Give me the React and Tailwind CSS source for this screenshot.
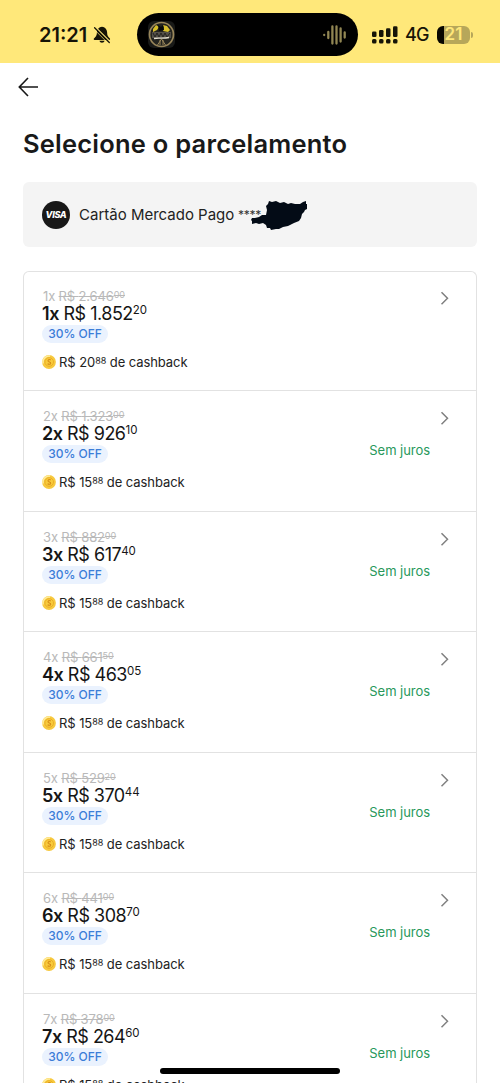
const installments = [
  { count: 1, oldValue: '2.646', oldCents: '00', value: '1.852', cents: '20', cashback: '20' },
  { count: 2, oldValue: '1.323', oldCents: '00', value: '926', cents: '10', cashback: '15', interestFree: true },
  { count: 3, oldValue: '882', oldCents: '00', value: '617', cents: '40', cashback: '15', interestFree: true },
  { count: 4, oldValue: '661', oldCents: '50', value: '463', cents: '05', cashback: '15', interestFree: true },
  { count: 5, oldValue: '529', oldCents: '20', value: '370', cents: '44', cashback: '15', interestFree: true },
  { count: 6, oldValue: '441', oldCents: '00', value: '308', cents: '70', cashback: '15', interestFree: true },
  { count: 7, oldValue: '378', oldCents: '00', value: '264', cents: '60', cashback: '15', interestFree: true },
];

function BellOffIcon() {
  return (
    <svg width="18" height="18" viewBox="0 0 18 18">
      <path
        d="M9 .8C6 1.200 4 3.400 3.900 6.200c0 3.600-1.200 4.500-3 6.300-.4.600-.1 1.400.6 1.400h14.800c.7 0 1-.8.6-1.400-1.800-1.800-2.800-2.700-2.800-6.300C14 3.400 12 1.200 9 .8ZM6.400 14.800c.3 1.200 1.300 2 2.600 2s2.300-.8 2.600-2Z"
        fill="#161407"
      />
      <path d="M2.700 1.500 18 16.800" stroke="#ffe87a" strokeWidth="1.500" />
      <path d="M1.600 1.800 16.300 16.500" stroke="#161407" strokeWidth="1.300" strokeLinecap="round" />
      <path d="M0 2.200 15 17.200" stroke="#ffe87a" strokeWidth=".7" />
    </svg>
  );
}

function AlbumArt() {
  return (
    <svg width="27" height="27" viewBox="0 0 27 27">
      <rect width="27" height="27" rx="6" fill="#191a18" />
      <circle cx="13.500" cy="13.500" r="12" fill="#24241f" stroke="#99865a" strokeWidth="1.700" />
      <path d="M5 8l3-4 3 2-2 3-4 2Z" fill="#d5bc28" />
      <path d="M15 4l4 1 3 4-2 2-5-1 1-3Z" fill="#d8bf2a" />
      <path d="M10 4l3 2 2-2 1 5-5 1Z" fill="#090b0a" />
      <path d="M4 11h19v6H4z" fill="#555149" />
      <path d="M5 12l2 4 2-4 2 4 2-4 2 4 2-4 2 4 3-4" fill="none" stroke="#24231f" />
      <path d="M6 17.500c5-1 9 .5 15-1" fill="none" stroke="#e4e0d0" strokeWidth="1.300" />
      <path d="M13.500 18l-4 6M13.500 18l4 6M12 19v5M15 19v5" stroke="#99865a" strokeWidth="1" />
    </svg>
  );
}

function Waveform() {
  return (
    <svg width="24" height="20" viewBox="0 0 24 20" stroke="#918653" strokeWidth="2.300" strokeLinecap="round">
      <path d="M1.200 9.900v.2M5.300 7v6M9.400 1.500v17M13.500 1.500v17M17.600 3.500v13M21.700 7.500v5" />
    </svg>
  );
}

function SignalIcon() {
  return (
    <svg width="26" height="18" viewBox="0 0 26 18" fill="#161407">
      <rect x="0" y="5.500" width="4.500" height="5.500" rx="1.300" />
      <rect x="7" y="4" width="4.500" height="7" rx="1.300" />
      <rect x="14" y="2.300" width="4.500" height="8.700" rx="1.300" />
      <rect x="21" y="0.300" width="4.500" height="10.700" rx="1.300" />
      <rect x="0" y="13" width="4.500" height="4.500" rx="1.500" />
      <rect x="7" y="13" width="4.500" height="4.500" rx="1.500" />
      <rect x="14" y="13" width="4.500" height="4.500" rx="1.500" />
      <rect x="21" y="13" width="4.500" height="4.500" rx="1.500" />
    </svg>
  );
}

function CoinIcon() {
  return (
    <svg className="shrink-0" width="14" height="14" viewBox="0 0 14 14">
      <circle cx="7" cy="7" r="6.900" fill="#f7c93f" />
      <path d="M1.200 8.500A6 6 0 0 1 8 1.100" fill="none" stroke="#ffec9a" strokeWidth="1.600" />
      <circle cx="7.200" cy="7" r="4.300" fill="#f8cb3c" stroke="#e9ab22" strokeWidth=".9" />
      <path d="M8.800 4.900C7 4 5.600 5 6.200 6.300c.5 1 2.700.7 2.500 2.100-.2 1-1.900 1.200-3.100.4" fill="none" stroke="#d58a16" strokeWidth="1.100" />
    </svg>
  );
}

function ChevronIcon() {
  return (
    <svg width="9" height="14" viewBox="0 0 9 14" fill="none">
      <path d="m1.500 1.300 6 6-6 6" stroke="#808080" strokeWidth="1.500" />
    </svg>
  );
}

function StatusBar() {
  return (
    <div className="flex h-[63px] shrink-0 items-start bg-[#ffe87a] pt-[13px] text-[#161407]">
      <div className="flex h-[43px] w-[137px] shrink-0 items-center pl-[39px]">
        <span className="w-[54px] text-[20px] leading-none font-semibold">21:21</span>
        <BellOffIcon />
      </div>
      <div className="flex h-[43px] w-[221px] shrink-0 items-center justify-between rounded-full bg-black pr-[11px] pl-[11px]">
        <AlbumArt />
        <Waveform />
      </div>
      <div className="flex h-[43px] items-center pl-[14px]">
        <SignalIcon />
        <span className="ml-[7px] w-[25px] text-[18px] leading-none font-medium tracking-[-0.8px]">4G</span>
        <div className="ml-[7px] flex h-[18px] w-[33px] items-center justify-center overflow-hidden rounded-[6px] bg-linear-to-r from-[#080700] from-21% to-[#b7a75a] to-21% text-[17px] leading-none font-semibold text-[#ffe87a]">
          21
        </div>
        <div className="ml-px h-[6px] w-[2px] rounded-r-full bg-[#b7a75a]" />
      </div>
    </div>
  );
}

function SelectedCard() {
  return (
    <div className="mx-[23px] mt-[23px] flex h-[65px] shrink-0 items-center rounded-[6px] bg-[#f4f4f4] pl-[19px]">
      <div className="flex size-[28px] items-center justify-center rounded-full bg-[#181818] text-[9px] font-extrabold tracking-[-0.3px] text-white italic">
        VISA
      </div>
      <span className="ml-[9px] w-[159px] pt-px text-[15px] whitespace-nowrap text-[#222]">Cartão Mercado Pago</span>
      <span className="w-[23px] text-[12px] tracking-[-0.3px] text-[#333]">****</span>
      <svg className="-ml-[10px]" width="56" height="32" viewBox="0 0 56 32">
        <path
          d="M1 19 0 21l1 1 0 3 4-1 3 1 4-1 3 2 1 3 3 0 1 2 5-1 3 0 4-2 5-1 6-3 5-2 2-3 1-4 2-2 1-2 2-1 0-5-1 0 0-3-3 1-3 2-5 0-4-1-3 1-4-2-4 1-4-2-4 1-3-1-1 3-2 2 1 4-1 5-4 0-3 2-4 1-3 0Z"
          fill="#030b16"
        />
      </svg>
    </div>
  );
}

function InstallmentRow({ item }) {
  return (
    <div className="flex h-[120.5px] shrink-0 justify-between border-b border-[#e2e2e2] pt-[17px] pr-[27px] pl-[18px] whitespace-nowrap first:h-[119px] first:pt-[16px] last:border-b-0">
      <div className="flex flex-col items-start">
        <div className="h-[15px] pl-px text-[13px] leading-[17px] tracking-[-0.15px] text-[#b9b9b9]">
          {item.count}x{' '}
          <span className="line-through">
            R$ {item.oldValue}
            <span className="inline-block align-[3px] text-[9px] leading-none tracking-normal line-through">{item.oldCents}</span>
          </span>
        </div>
        <div className="mt-px h-[20px] text-[18px] leading-[20px] tracking-[-0.5px] text-[#151515]">
          <span className="font-semibold">{item.count}x</span> R$ {item.value}
          <span className="align-[6px] text-[11.5px] leading-none tracking-normal">{item.cents}</span>
        </div>
        <div className="mt-px flex h-[18px] w-[66px] items-center justify-center rounded-full bg-[#eaf2fe] text-[12px] leading-none font-medium text-[#3b7dd8]">
          30% OFF
        </div>
        <div className="mt-[10px] flex h-[18px] items-center text-[13px] leading-[18px] tracking-[-0.07px] text-[#222]">
          <CoinIcon />
          <span className="ml-[3px]">
            R$ {item.cashback}
            <span className="align-[3px] text-[9px] leading-none">88</span> de cashback
          </span>
        </div>
      </div>
      <div className="flex flex-col items-end pt-[3px]">
        <ChevronIcon />
        {item.interestFree && (
          <span className="mt-[16px] mr-[19px] text-[13px] leading-[18px] tracking-[-0.05px] text-[#28985b]">Sem juros</span>
        )}
      </div>
    </div>
  );
}

export default function App() {
  return (
    <div className="relative flex h-[1083px] w-[500px] flex-col overflow-hidden bg-white font-['Inter',sans-serif]">
      <StatusBar />
      <div className="shrink-0 pt-[14px] pl-[18px]">
        <svg width="21" height="20" viewBox="0 0 21 20" fill="none" stroke="#171717" strokeWidth="1.600">
          <path d="M10 1 1.300 10 10 19M1.300 10H20" />
        </svg>
      </div>
      <h1 className="mt-[32px] shrink-0 pl-[23px] text-[25.5px] leading-[30px] font-semibold tracking-[0.22px] whitespace-nowrap text-[#191919]">
        Selecione o parcelamento
      </h1>
      <SelectedCard />
      <div className="mx-[23px] mt-[24px] flex min-h-0 grow flex-col overflow-hidden rounded-t-[6px] border border-b-0 border-[#e2e2e2]">
        {installments.map((item) => (
          <InstallmentRow key={item.count} item={item} />
        ))}
      </div>
      {/* home indicator */}
      <div className="absolute bottom-[9px] left-[160px] h-[6px] w-[180px] rounded-full bg-black" />
    </div>
  );
}
